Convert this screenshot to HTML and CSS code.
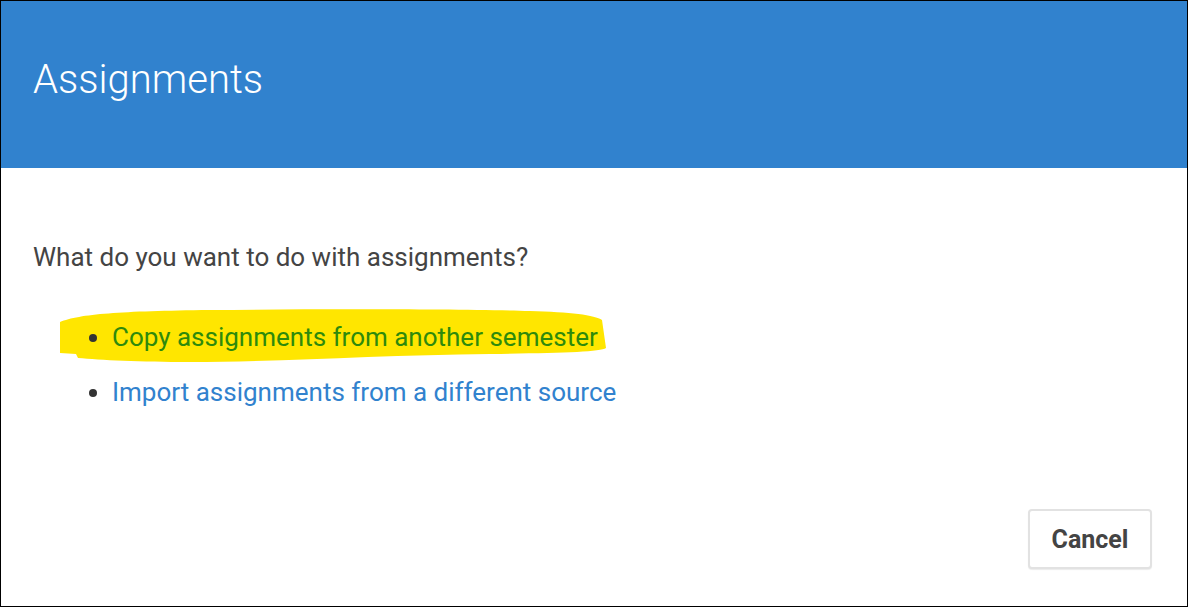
FILE: index.html
```html
<!DOCTYPE html>
<html>
<head>
<meta charset="utf-8">
<link rel="stylesheet" href="styles.css">
</head>
<body>
<div class="dialog">
  <header class="dialog-header">
    <h1 class="dialog-title">Assignments</h1>
  </header>
  <main class="dialog-body">
    <p class="question">What do you want to do with assignments?</p>
    <ul class="options">
      <li class="option highlighted">
        <svg class="highlight" viewBox="0 0 548 56" preserveAspectRatio="none" aria-hidden="true">
          <path d="M0 14 C 20 6, 60 3, 150 2 C 260 1, 400 1, 470 3 C 510 4, 535 7, 542 12 L 546 40 C 540 44, 500 45, 430 46 C 320 47, 220 54, 130 54 C 80 54, 40 52, 18 50 L 16 46 L 0 45 Z" fill="#ffe600"/>
        </svg>
        <a class="link" href="#">Copy assignments from another semester</a>
      </li>
      <li class="option">
        <a class="link" href="#">Import assignments from a different source</a>
      </li>
    </ul>
  </main>
  <footer class="dialog-footer">
    <button class="btn-cancel">Cancel</button>
  </footer>
</div>
</body>
</html>
```
FILE: styles.css
```css
* { box-sizing: border-box; }
html, body { margin: 0; padding: 0; background: #fff; }
body { font-family: Roboto, "Liberation Sans", sans-serif; }
.dialog {
  position: relative;
  z-index: 0;
  width: 1188px;
  height: 607px;
  border: 1px solid #000;
  display: flex;
  flex-direction: column;
  background: #fff;
}
.dialog-header {
  height: 167px;
  background: #3182ce;
  padding: 0 32px;
  display: flex;
  align-items: center;
}
.dialog-title {
  margin: 0 0 10px 0;
  font-weight: 300;
  font-size: 40px;
  color: #fff;
  line-height: 1;
}
.dialog-body {
  flex: 1;
  padding: 0 32px;
}
.question {
  margin: 73px 0 0 0;
  font-size: 26px;
  line-height: 32px;
  color: #444;
}
.options {
  margin: 37px 0 0 0;
  padding: 0 0 0 79px;
  color: #333;
  font-size: 26px;
  line-height: 55px;
}
.option { position: relative; }
.highlight {
  position: absolute;
  z-index: -1;
  left: -52px;
  top: -2px;
  width: 548px;
  height: 56px;
}
.link {
  color: #3182ce;
  text-decoration: none;
}
.highlighted .link { color: #2e8a0c; }
.dialog-footer {
  display: flex;
  justify-content: flex-end;
  padding: 0 35px 37px 0;
}
.btn-cancel {
  width: 124px;
  height: 60px;
  background: #fff;
  border: 2px solid #e2e2e2;
  border-radius: 4px;
  box-shadow: 0 1px 1px rgba(0,0,0,0.08);
  font-family: Roboto, "Liberation Sans", sans-serif;
  font-weight: 700;
  font-size: 25px;
  color: #444;
  padding: 0;
}
```
